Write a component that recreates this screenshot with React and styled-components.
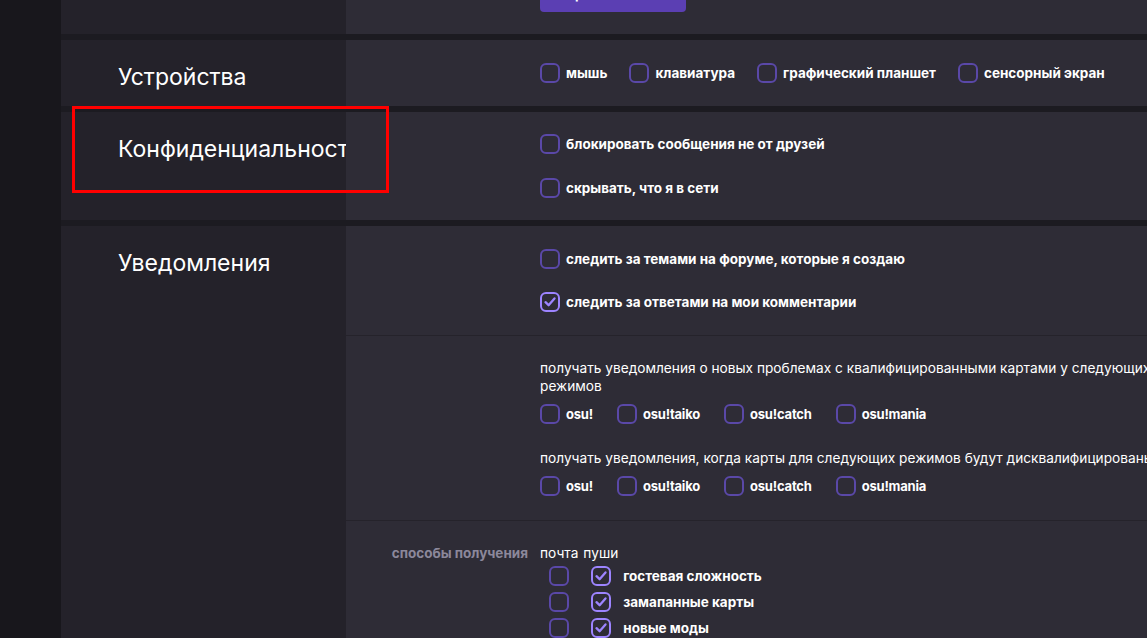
import React from 'react';
import styled, { createGlobalStyle } from 'styled-components';

const GlobalStyle = createGlobalStyle`
  html, body {
    margin: 0;
    padding: 0;
    background: #18171c;
    overflow: hidden;
  }
  body {
    font-family: Inter, "Noto Sans", sans-serif;
    color: #fff;
  }
`;

const modes = ['osu!', 'osu!taiko', 'osu!catch', 'osu!mania'];

const Check = ({ checked }) => (
  <Box $checked={checked}>
    {checked && (
      <svg width="14" height="14" viewBox="0 0 14 14" fill="none">
        <path d="M2.5 7.2 L5.6 10.2 L11.5 3.4" stroke="#9d84ff" strokeWidth="2.3" strokeLinecap="round" strokeLinejoin="round" />
      </svg>
    )}
  </Box>
);

const Option = ({ label, checked, mode }) => (
  <OptionRow>
    <Check checked={checked} />
    <OptionLabel $mode={mode}>{label}</OptionLabel>
  </OptionRow>
);

const App = () => {
  return (
    <>
      <GlobalStyle />
      <Page>
        <Sections>
          <Section>
            <LabelCol />
            <ContentCol>
              <Group $pad="20px 0 22px">
                <div />
                <div>
                  <SaveButton>
                    сохранить
                    <svg width="10" height="10" viewBox="0 0 10 10">
                      <path d="M5 1 L5 8" stroke="#fff" strokeWidth="2" strokeLinecap="round" />
                    </svg>
                  </SaveButton>
                </div>
              </Group>
            </ContentCol>
          </Section>

          <Section>
            <LabelCol>
              <Heading>Устройства</Heading>
            </LabelCol>
            <ContentCol>
              <Group $pad="21px 0">
                <div />
                <Inline>
                  <Option label="мышь" />
                  <Option label="клавиатура" />
                  <Option label="графический планшет" />
                  <Option label="сенсорный экран" />
                </Inline>
              </Group>
            </ContentCol>
          </Section>

          <Section>
            <Highlight />
            <LabelCol>
              <Heading>Конфиденциальность</Heading>
            </LabelCol>
            <ContentCol>
              <Group $pad="20px 0">
                <div />
                <Stack $gap={20}>
                  <Option label="блокировать сообщения не от друзей" />
                  <Option label="скрывать, что я в сети" />
                </Stack>
              </Group>
            </ContentCol>
          </Section>

          <Section>
            <LabelCol>
              <Heading>Уведомления</Heading>
            </LabelCol>
            <ContentCol>
              <Group $pad="21px 0" $divider>
                <div />
                <Stack $gap={19}>
                  <Option label="следить за темами на форуме, которые я создаю" />
                  <Option label="следить за ответами на мои комментарии" checked />
                </Stack>
              </Group>

              <Group $pad="23px 0 22px" $divider>
                <div />
                <Stack $gap={0}>
                  <Note>
                    получать уведомления о новых проблемах с квалифицированными картами у следующих режимов
                  </Note>
                  <ModeRow>
                    {modes.map((m) => (
                      <Option key={m} label={m} mode />
                    ))}
                  </ModeRow>
                  <Note $top={23}>
                    получать уведомления, когда карты для следующих режимов будут дисквалифицированы
                  </Note>
                  <ModeRow>
                    {modes.map((m) => (
                      <Option key={m} label={m} mode />
                    ))}
                  </ModeRow>
                </Stack>
              </Group>

              <Group $pad="23px 0 20px">
                <SideLabel>способы получения</SideLabel>
                <DeliveryGrid>
                  <ColHead>почта</ColHead>
                  <ColHead>пуши</ColHead>
                  <span />
                  {['гостевая сложность', 'замапанные карты', 'новые моды'].map((t) => (
                    <React.Fragment key={t}>
                      <Cell><Check /></Cell>
                      <Cell><Check checked /></Cell>
                      <RowLabel>{t}</RowLabel>
                    </React.Fragment>
                  ))}
                </DeliveryGrid>
              </Group>
            </ContentCol>
          </Section>
        </Sections>
      </Page>
    </>
  );
};

const Page = styled.div`
  padding-left: 61px;
  margin-top: -44px;
  width: 1400px;
`;

const Sections = styled.div`
  display: flex;
  flex-direction: column;
  gap: 6px;
  background: #1c1b21;
`;

const Section = styled.section`
  position: relative;
  display: grid;
  grid-template-columns: 285px 1fr;
`;

const Highlight = styled.div`
  position: absolute;
  left: 11px;
  top: -6px;
  width: 311px;
  height: 81px;
  border: 3px solid #ff0000;
  z-index: 5;
  pointer-events: none;
`;

const LabelCol = styled.div`
  background: #24222a;
  overflow: hidden;
  padding: 24px 0 0 57px;
`;

const Heading = styled.h2`
  margin: 0;
  font-family: Inter, "Noto Sans", sans-serif;
  font-weight: 400;
  font-size: 23px;
  line-height: 26px;
  white-space: nowrap;
  color: #fff;
`;

const ContentCol = styled.div`
  background: #2e2c36;
  display: flex;
  flex-direction: column;
`;

const Group = styled.div`
  display: grid;
  grid-template-columns: 182px 1fr;
  column-gap: 12px;
  padding: ${(p) => p.$pad};
  border-bottom: ${(p) => (p.$divider ? '1px solid #25232b' : 'none')};
`;

const Inline = styled.div`
  display: flex;
  gap: 22px;
  align-items: center;
`;

const Stack = styled.div`
  display: flex;
  flex-direction: column;
  gap: ${(p) => p.$gap}px;
`;

const ModeRow = styled.div`
  display: flex;
  gap: 24px;
  margin-top: 7px;
`;

const OptionRow = styled.label`
  display: flex;
  align-items: center;
  gap: 6px;
  height: 24px;
`;

const OptionLabel = styled.span`
  font-size: ${(p) => (p.$mode ? '13px' : '13.5px')};
  font-weight: 700;
  color: #fff;
  white-space: nowrap;
  letter-spacing: ${(p) => (p.$mode ? '-0.2px' : '0')};
`;

const Box = styled.span`
  box-sizing: border-box;
  width: 20px;
  height: 20px;
  border-radius: 6px;
  border: 2px solid ${(p) => (p.$checked ? '#9d84ff' : '#5a48a8')};
  display: inline-flex;
  align-items: center;
  justify-content: center;
  flex-shrink: 0;
`;

const Note = styled.div`
  width: 640px;
  font-size: 13.7px;
  line-height: 18px;
  color: #fff;
  margin-top: ${(p) => p.$top || 0}px;
`;

const SideLabel = styled.div`
  text-align: right;
  font-size: 13.5px;
  font-weight: 700;
  line-height: 19px;
  color: #8c889b;
  white-space: nowrap;
`;

const DeliveryGrid = styled.div`
  display: grid;
  grid-template-columns: auto auto 1fr;
  grid-auto-rows: 26px;
  grid-template-rows: 19px;
  column-gap: 5px;
  align-items: center;
`;

const ColHead = styled.span`
  font-size: 13.7px;
  line-height: 19px;
  color: #fff;
`;

const Cell = styled.span`
  display: flex;
  justify-content: center;
`;

const RowLabel = styled.span`
  font-size: 13.5px;
  font-weight: 700;
  color: #fff;
  padding-left: 0;
  white-space: nowrap;
`;

const SaveButton = styled.button`
  display: inline-flex;
  align-items: center;
  justify-content: space-between;
  gap: 10px;
  box-sizing: border-box;
  width: 146px;
  height: 36px;
  padding: 0 20px 0 12px;
  border: none;
  border-radius: 4px;
  background: #5b3fb3;
  color: #fff;
  font-family: Inter, "Noto Sans", sans-serif;
  font-size: 13px;
  font-weight: 700;
`;

export default App;
